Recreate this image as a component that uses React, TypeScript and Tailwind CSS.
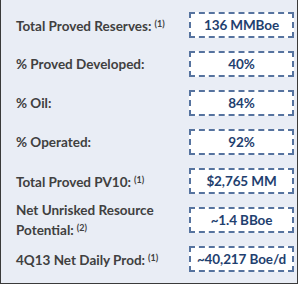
import React from "react";

const rows: { label: React.ReactNode; note?: string; value: string }[] = [
  { label: "Total Proved Reserves:", note: "(1)", value: "136 MMBoe" },
  { label: "% Proved Developed:", value: "40%" },
  { label: "% Oil:", value: "84%" },
  { label: "% Operated:", value: "92%" },
  { label: "Total Proved PV10:", note: "(1)", value: "$2,765 MM" },
  {
    label: (
      <>
        Net Unrisked Resource
        <br />
        Potential:
      </>
    ),
    note: "(2)",
    value: "~1.4 BBoe",
  },
  { label: "4Q13 Net Daily Prod:", note: "(1)", value: "~40,217 Boe/d" },
];

const App = () => {
  return (
    <div
      className="w-[298px] h-[284px] bg-[#e9edf5] border-l border-r border-b border-[#3a3a3a] pt-[12px] pl-[15px] pr-[3px] flex flex-col gap-[13px]"
      style={{ fontFamily: "Lato, 'Open Sans', sans-serif" }}
    >
      {rows.map((r, i) => (
        <div key={i} className="flex items-center h-[26px]">
          <div className="flex-1 text-[13.5px] leading-[18px] font-bold text-[#404040]">
            {r.label}
            {r.note ? (
              <span className="text-[9px] align-[4px] ml-[3px] font-bold">
                {r.note}
              </span>
            ) : null}
          </div>
          <div className="w-[105px] h-[26px] bg-white border-2 border-dashed border-[#56739f] flex items-center justify-center text-[13.5px] font-bold text-[#1f3f6f] tracking-[-0.1px]">
            {r.value}
          </div>
        </div>
      ))}
    </div>
  );
};

export default App;
